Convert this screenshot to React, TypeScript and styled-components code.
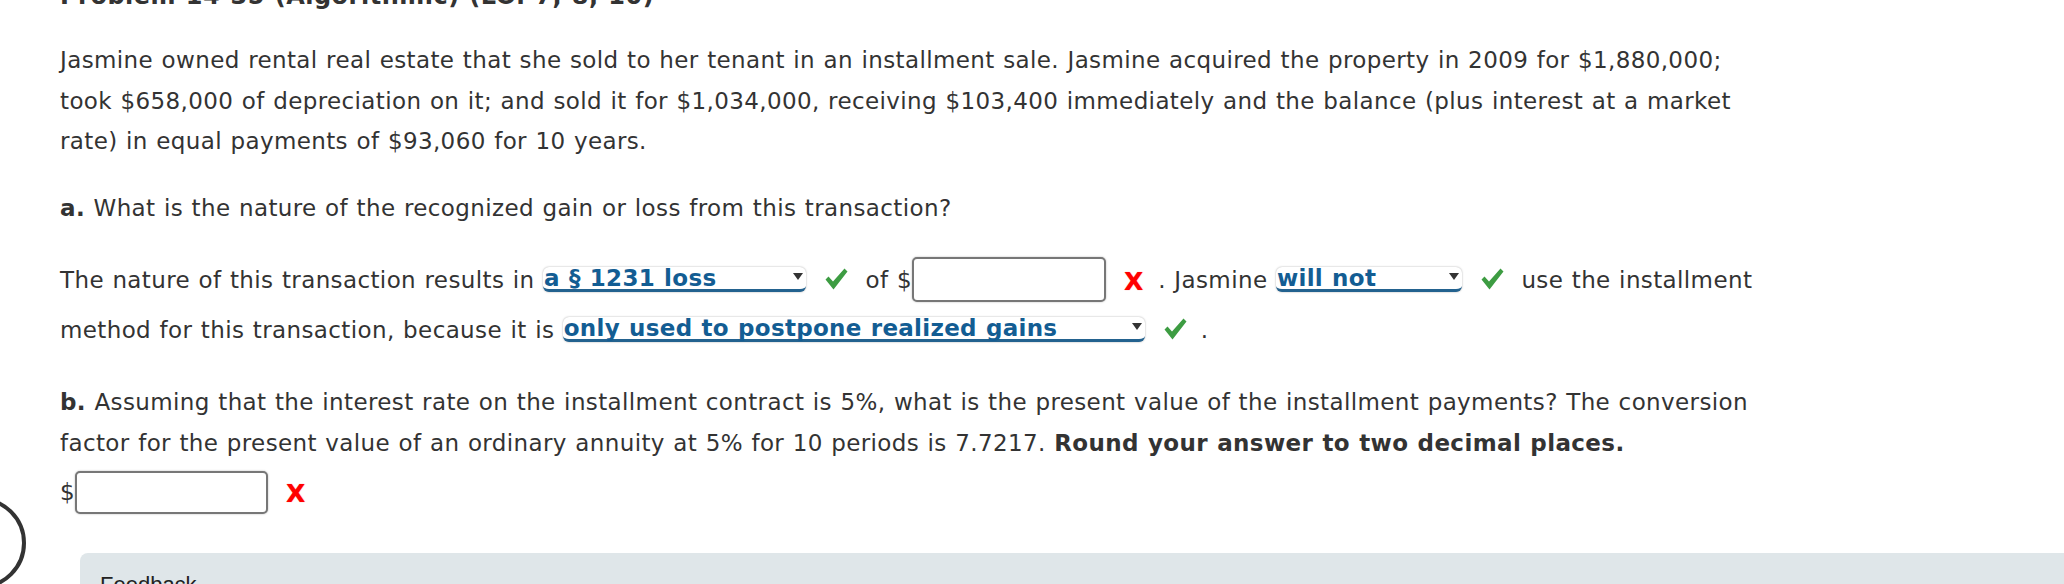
import React from "react";
import styled, { createGlobalStyle } from "styled-components";

const Global = createGlobalStyle`
  html, body { margin: 0; padding: 0; background: #ffffff; }
  body {
    font-family: "DejaVu Sans", Verdana, sans-serif;
    color: #333333;
    overflow: hidden;
  }
  #root { width: 2064px; height: 584px; overflow: hidden; position: relative; }
`;

const Page = styled.main`
  display: flex;
  flex-direction: column;
  padding-left: 60px;
  font-size: 23px;
  line-height: 40.5px;
  letter-spacing: 0.38px;
  word-spacing: 0.8px;
`;

const Title = styled.h1`
  margin: -18px 0 0 0;
  font-size: 24px;
  line-height: 29px;
  font-weight: bold;
  letter-spacing: 0.5px;
  color: #333333;
  white-space: nowrap;
`;

const Content = styled.div`
  display: flex;
  flex-direction: column;
  gap: 26.5px;
  margin-top: 29px;
`;

const Block = styled.div`
  display: flex;
  flex-direction: column;
  white-space: nowrap;
`;

const QuestionB = styled.section`
  display: flex;
  flex-direction: column;
  gap: 3.5px;
  margin-top: 0.5px;
`;

const Line = styled.div`
  height: 40.5px;
`;

const Row = styled.div`
  height: 50px;
  line-height: 50px;
  white-space: nowrap;
`;

const Strong = styled.b`
  font-weight: bold;
`;

const Select = styled.span<{ $w: number }>`
  display: inline-flex;
  align-items: center;
  justify-content: space-between;
  box-sizing: border-box;
  width: ${(p) => p.$w}px;
  height: 25px;
  padding: 0 3px 0 1px;
  vertical-align: 2px;
  background: #ffffff;
  border-radius: 6px;
  border-bottom: 3px solid #23628f;
  box-shadow: 0 0 2px rgba(0, 0, 0, 0.35);
  color: #135d93;
  font-weight: bold;
  line-height: 22px;
  letter-spacing: 0.3px;
`;

const Arrow = styled.span`
  width: 0;
  height: 0;
  border-left: 5px solid transparent;
  border-right: 5px solid transparent;
  border-top: 7px solid #333333;
  margin-top: -3px;
`;

const Input = styled.span<{ $w: number; $h: number }>`
  display: inline-block;
  box-sizing: border-box;
  width: ${(p) => p.$w}px;
  height: ${(p) => p.$h}px;
  vertical-align: -14px;
  background: #ffffff;
  border: 2px solid #777777;
  border-radius: 5px;
  box-shadow: 0 0 2px rgba(0, 0, 0, 0.3);
`;

const CheckIcon = styled.svg`
  display: inline-block;
  width: 23px;
  height: 22px;
  vertical-align: -2px;
  margin: 0 9px 0 19px;
`;

const XMark = styled.span`
  display: inline-block;
  margin: 0 15px 0 18px;
  color: #ff0000;
  font-weight: bold;
  font-size: 25px;
  letter-spacing: 0;
  vertical-align: -2px;
  text-shadow: 0 0 1px rgba(255, 0, 0, 0.6);
`;

const Feedback = styled.div`
  margin: 10px 0 0 20px;
  height: 60px;
  background: #dfe6e9;
  border-radius: 8px 0 0 0;
  padding: 19px 0 0 20px;
  box-sizing: border-box;
  font-family: "Liberation Sans", Arial, sans-serif;
  font-size: 22px;
  line-height: 26px;
  letter-spacing: 0;
  word-spacing: 0;
  color: #222222;
`;

const Ring = styled.div`
  position: absolute;
  left: -66px;
  top: 497px;
  width: 92px;
  height: 92px;
  box-sizing: border-box;
  border: 4.5px solid #333333;
  border-radius: 50%;
`;

const Check = () => (
  <CheckIcon viewBox="0 0 23 22">
    <polygon points="0.5,11.5 3.5,8.5 8,13.5 19.5,0.5 22.5,3.5 8.5,21.5" fill="#3d9c42" />
  </CheckIcon>
);

const Dropdown = ({ w, children }: { w: number; children: React.ReactNode }) => (
  <Select $w={w}>
    <span>{children}</span>
    <Arrow />
  </Select>
);

export default function App() {
  return (
    <>
      <Global />
      <Ring />
      <Page>
        <Title>Problem 14-35 (Algorithmic) (LO. 7, 8, 10)</Title>
        <Content>
          <Block>
            <Line>
              Jasmine owned rental real estate that she sold to her tenant in an installment sale. Jasmine acquired the property in 2009 for $1,880,000;
            </Line>
            <Line>
              took $658,000 of depreciation on it; and sold it for $1,034,000, receiving $103,400 immediately and the balance (plus interest at a market
            </Line>
            <Line>rate) in equal payments of $93,060 for 10 years.</Line>
          </Block>
          <Block>
            <Line>
              <Strong>a.</Strong> What is the nature of the recognized gain or loss from this transaction?
            </Line>
          </Block>
          <Block>
            <Row>
              The nature of this transaction results in <Dropdown w={263}>a § 1231 loss</Dropdown>
              <Check /> of $<Input $w={194} $h={45} />
              <XMark>X</XMark>. Jasmine <Dropdown w={186}>will not</Dropdown>
              <Check /> use the installment
            </Row>
            <Row>
              method for this transaction, because it is <Dropdown w={582}>only used to postpone realized gains</Dropdown>
              <Check />{"\u2009"}.
            </Row>
          </Block>
          <QuestionB>
            <Block>
              <Line>
                <Strong>b.</Strong> Assuming that the interest rate on the installment contract is 5%, what is the present value of the installment payments? The conversion
              </Line>
              <Line>
                factor for the present value of an ordinary annuity at 5% for 10 periods is 7.7217. <Strong>Round your answer to two decimal places.</Strong>
              </Line>
            </Block>
            <Row>
              $<Input $w={193} $h={43} />
              <XMark>X</XMark>
            </Row>
          </QuestionB>
          <Feedback>Feedback</Feedback>
        </Content>
      </Page>
    </>
  );
}
